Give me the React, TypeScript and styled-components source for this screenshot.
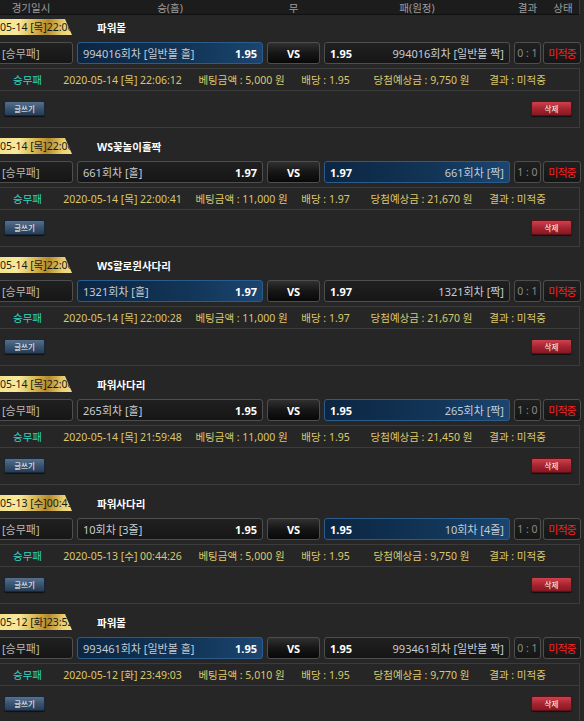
import styled, { createGlobalStyle } from "styled-components";

const GlobalStyle = createGlobalStyle`
  html, body {
    margin: 0;
    padding: 0;
    background: #262626;
    overflow: hidden;
  }
  body {
    font-family: "Noto Sans", "Noto Sans CJK KR", sans-serif;
  }
`;

const Page = styled.div`
  width: 591px;
  margin-left: -11px;
`;

const cols = "84px 186px 53px 186px 27px 36px";

const Header = styled.div`
  display: grid;
  grid-template-columns: ${cols};
  column-gap: 4px;
  height: 14px;
  background: #1c1c1c;
  border-bottom: 1px solid #101010;
  border-right: 1px solid #3a3a3a;
  width: 590px;
  box-sizing: content-box;
`;

const HeadCell = styled.div`
  display: flex;
  align-items: center;
  justify-content: center;
  color: #9c9c9c;
  font-size: 10.5px;
  white-space: nowrap;
`;

const List = styled.div`
  display: flex;
  flex-direction: column;
  gap: 10px;
  padding-top: 4px;
`;

const Block = styled.div`
  display: flex;
  flex-direction: column;
`;

const TitleRow = styled.div`
  display: flex;
  align-items: center;
  height: 16px;
`;

const DateBadge = styled.div`
  width: 83px;
  height: 16px;
  box-sizing: border-box;
  padding-left: 11px;
  overflow: hidden;
  white-space: nowrap;
  font-size: 10.5px;
  line-height: 16px;
  color: #1a1a1a;
  background: linear-gradient(
    100deg,
    #f2da78 0%,
    #f8ea9c 35%,
    #d8b650 55%,
    #b48a2c 70%,
    #ead070 88%,
    #f4e08c 100%
  );
  clip-path: polygon(0 0, calc(100% - 7px) 0, 100% 100%, 0 100%);
`;

const GameTitle = styled.div`
  margin-left: 25px;
  color: #ffffff;
  font-weight: bold;
  font-size: 10.5px;
`;

const BetRow = styled.div`
  display: grid;
  grid-template-columns: ${cols};
  column-gap: 4px;
  height: 22px;
  margin-top: 7px;
`;

const Box = styled.div<{ $active?: boolean }>`
  display: flex;
  align-items: center;
  justify-content: space-between;
  box-sizing: border-box;
  padding: 0 5px;
  border-radius: 3px;
  border: 1px solid ${(p) => (p.$active ? "#2b5c8c" : "#4e4e4e")};
  background: ${(p) =>
    p.$active
      ? "linear-gradient(90deg, #0c2642 0%, #123557 60%, #1b4570 100%)"
      : "linear-gradient(180deg, #202020 0%, #161616 100%)"};
  color: #c4ccd4;
  font-size: 11px;
  white-space: nowrap;
  overflow: hidden;
`;

const TypeBox = styled(Box)`
  justify-content: flex-start;
  padding-left: 12px;
  color: #b8b8b8;
`;

const VsBox = styled(Box)`
  justify-content: center;
  background: linear-gradient(180deg, #303030 0%, #161616 50%, #080808 100%);
  color: #ffffff;
  font-weight: bold;
`;

const ScoreBox = styled(Box)`
  justify-content: center;
  padding: 0;
  color: #8a8a8a;
  font-size: 10.5px;
`;

const StatusBox = styled(Box)`
  justify-content: center;
  padding: 0;
  margin-left: -2px;
  color: #ff1e1e;
  font-size: 11px;
  letter-spacing: -1px;
`;

const Odds = styled.span`
  color: #ffffff;
  font-weight: bold;
`;

const Detail = styled.div`
  margin-top: 4px;
  border: 1px solid #3c3c3c;
  width: 589px;
`;

const InfoRow = styled.div`
  display: flex;
  height: 21px;
  border-bottom: 1px solid #3c3c3c;
  font-size: 10.5px;
`;

const InfoCell = styled.div<{ $w: number; $color?: string }>`
  display: flex;
  align-items: center;
  justify-content: center;
  width: ${(p) => p.$w}px;
  flex-shrink: 0;
  white-space: nowrap;
  color: ${(p) => p.$color ?? "#dcc86c"};
`;

const ActionRow = styled.div`
  display: flex;
  justify-content: space-between;
  align-items: flex-start;
  height: 36px;
  padding: 10px 7px 0 14px;
  box-sizing: border-box;
`;

const SmallButton = styled.button<{ $red?: boolean }>`
  width: 41px;
  height: 15px;
  padding: 0;
  border-radius: 2px;
  border: 1px solid ${(p) => (p.$red ? "#5a1016" : "#18283a")};
  background: ${(p) =>
    p.$red
      ? "linear-gradient(180deg, #d0404c 0%, #a82632 50%, #861822 100%)"
      : "linear-gradient(180deg, #57708c 0%, #3a5470 50%, #273d55 100%)"};
  box-shadow: 0 1px 1px rgba(0, 0, 0, 0.6);
  color: #ffffff;
  font-family: "Noto Sans CJK KR", sans-serif;
  font-size: 7.5px;
  line-height: 13px;
`;

interface Bet {
  badge: string;
  game: string;
  home: string;
  away: string;
  odds: string;
  pick: "home" | "away";
  score: string;
  time: string;
  amount: string;
  win: string;
}

const bets: Bet[] = [
  {
    badge: "05-14 [목]22:06",
    game: "파워볼",
    home: "994016회차 [일반볼 홀]",
    away: "994016회차 [일반볼 짝]",
    odds: "1.95",
    pick: "home",
    score: "0 : 1",
    time: "2020-05-14 [목] 22:06:12",
    amount: "5,000",
    win: "9,750",
  },
  {
    badge: "05-14 [목]22:00",
    game: "WS꽃놀이홀짝",
    home: "661회차 [홀]",
    away: "661회차 [짝]",
    odds: "1.97",
    pick: "away",
    score: "1 : 0",
    time: "2020-05-14 [목] 22:00:41",
    amount: "11,000",
    win: "21,670",
  },
  {
    badge: "05-14 [목]22:00",
    game: "WS할로윈사다리",
    home: "1321회차 [홀]",
    away: "1321회차 [짝]",
    odds: "1.97",
    pick: "home",
    score: "0 : 1",
    time: "2020-05-14 [목] 22:00:28",
    amount: "11,000",
    win: "21,670",
  },
  {
    badge: "05-14 [목]22:00",
    game: "파워사다리",
    home: "265회차 [홀]",
    away: "265회차 [짝]",
    odds: "1.95",
    pick: "away",
    score: "1 : 0",
    time: "2020-05-14 [목] 21:59:48",
    amount: "11,000",
    win: "21,450",
  },
  {
    badge: "05-13 [수]00:45",
    game: "파워사다리",
    home: "10회차 [3줄]",
    away: "10회차 [4줄]",
    odds: "1.95",
    pick: "away",
    score: "1 : 0",
    time: "2020-05-13 [수] 00:44:26",
    amount: "5,000",
    win: "9,750",
  },
  {
    badge: "05-12 [화]23:52",
    game: "파워볼",
    home: "993461회차 [일반볼 홀]",
    away: "993461회차 [일반볼 짝]",
    odds: "1.95",
    pick: "home",
    score: "0 : 1",
    time: "2020-05-12 [화] 23:49:03",
    amount: "5,010",
    win: "9,770",
  },
];

function App() {
  return (
    <Page>
      <GlobalStyle />
      <Header>
        <HeadCell>경기일시</HeadCell>
        <HeadCell>승(홈)</HeadCell>
        <HeadCell>무</HeadCell>
        <HeadCell>패(원정)</HeadCell>
        <HeadCell>결과</HeadCell>
        <HeadCell>상태</HeadCell>
      </Header>
      <List>
        {bets.map((bet, i) => (
          <Block key={i}>
            <TitleRow>
              <DateBadge>{bet.badge}</DateBadge>
              <GameTitle>{bet.game}</GameTitle>
            </TitleRow>
            <BetRow>
              <TypeBox>[승무패]</TypeBox>
              <Box $active={bet.pick === "home"}>
                <span>{bet.home}</span>
                <Odds>{bet.odds}</Odds>
              </Box>
              <VsBox>VS</VsBox>
              <Box $active={bet.pick === "away"}>
                <Odds>{bet.odds}</Odds>
                <span>{bet.away}</span>
              </Box>
              <ScoreBox>{bet.score}</ScoreBox>
              <StatusBox>미적중</StatusBox>
            </BetRow>
            <Detail>
              <InfoRow>
                <InfoCell $w={75} $color="#2fd6c6">
                  승무패
                </InfoCell>
                <InfoCell $w={115}>{bet.time}</InfoCell>
                <InfoCell $w={123}>베팅금액 : {bet.amount} 원</InfoCell>
                <InfoCell $w={45}>배당 : {bet.odds}</InfoCell>
                <InfoCell $w={147}>당첨예상금 : {bet.win} 원</InfoCell>
                <InfoCell $w={45}>결과 : 미적중</InfoCell>
              </InfoRow>
              <ActionRow>
                <SmallButton>글쓰기</SmallButton>
                <SmallButton $red>삭제</SmallButton>
              </ActionRow>
            </Detail>
          </Block>
        ))}
      </List>
    </Page>
  );
}

export default App;
